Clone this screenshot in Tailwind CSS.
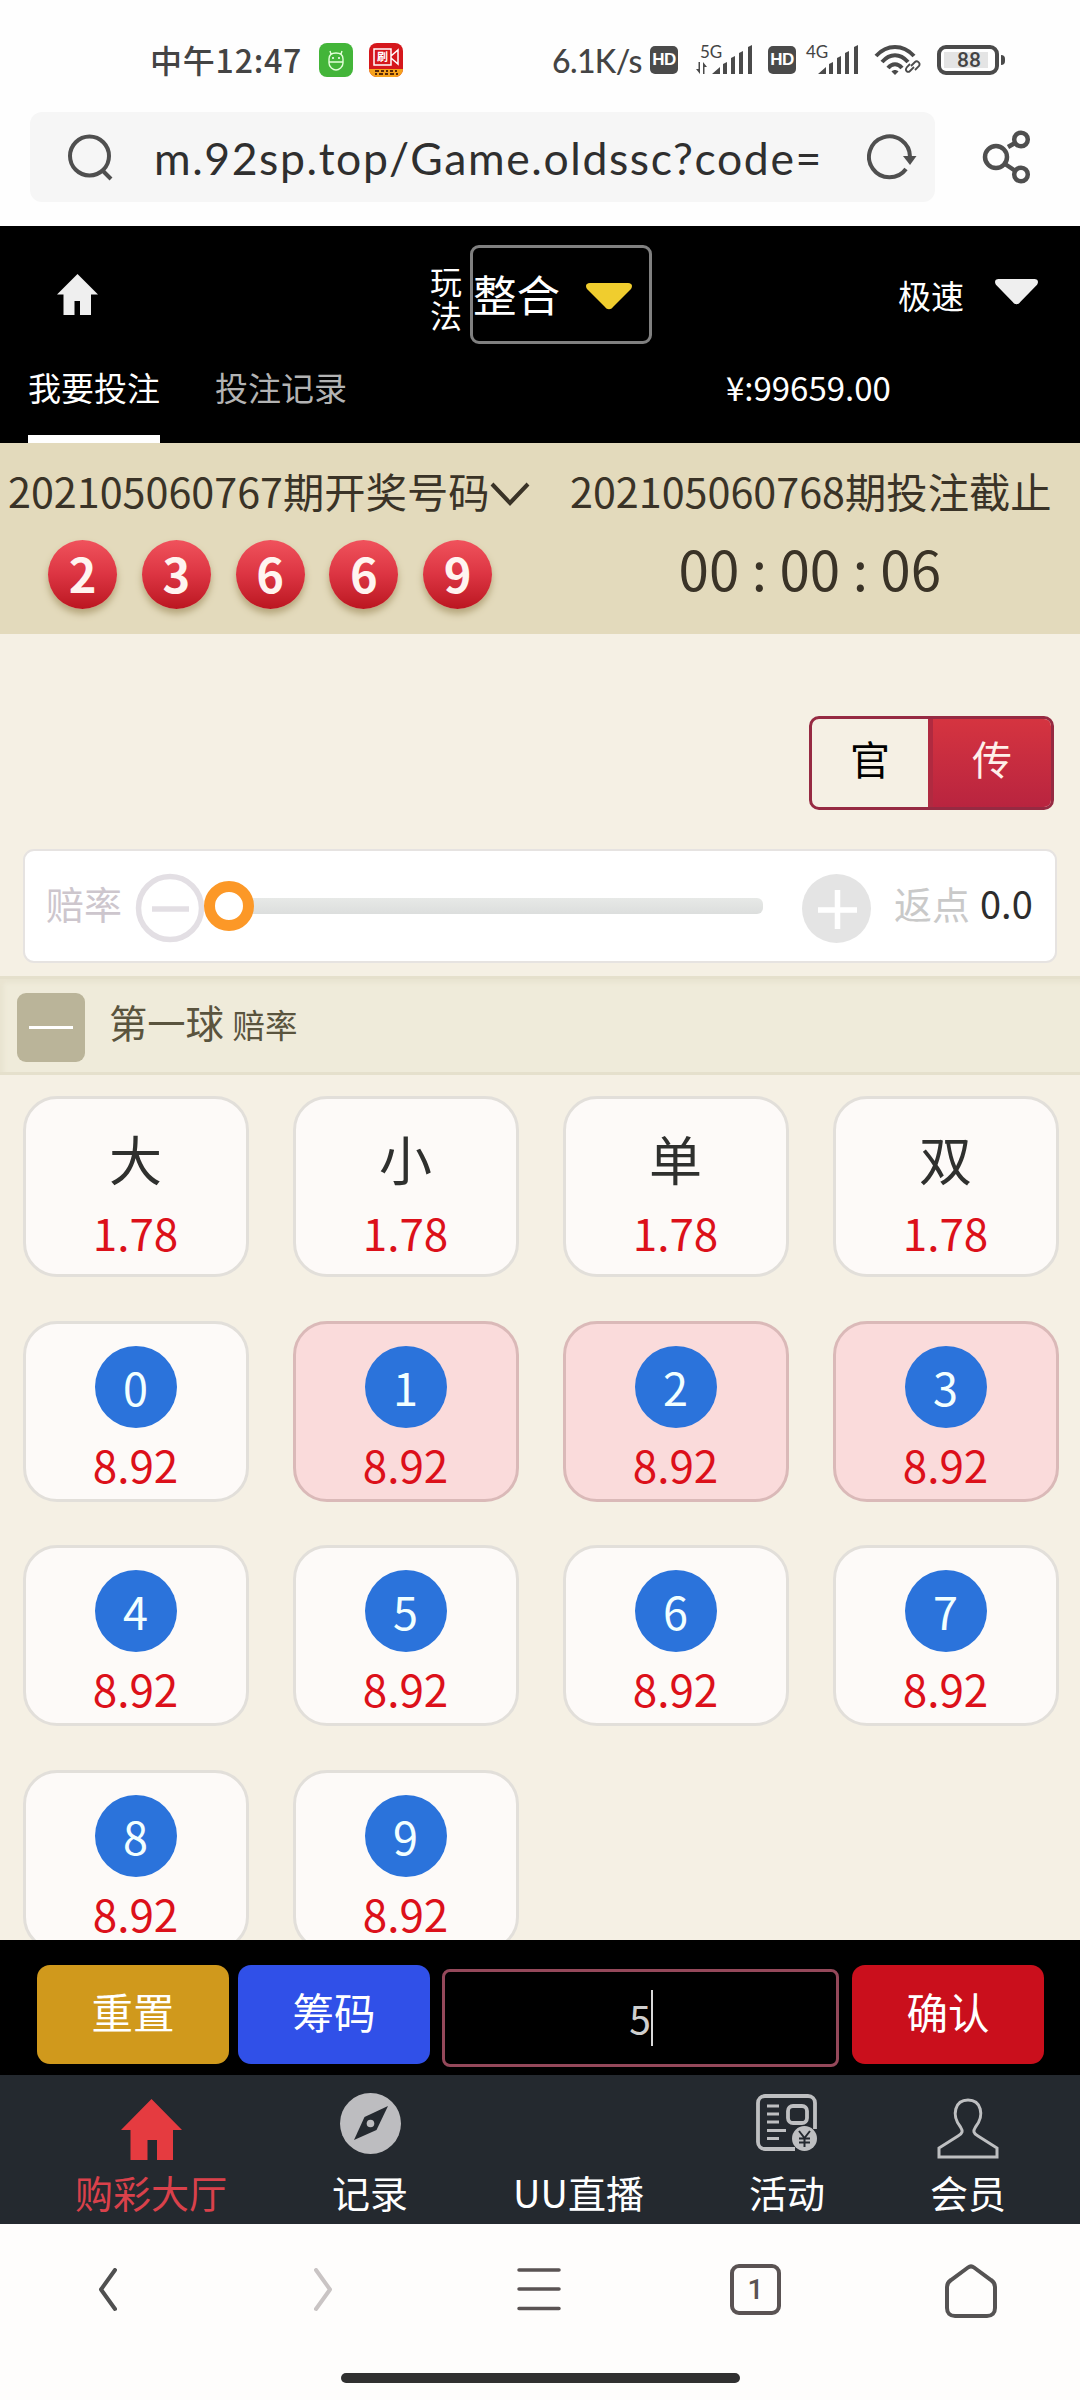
<!DOCTYPE html>
<html lang="zh-CN">
<head>
<meta charset="utf-8">
<title>投注</title>
<script src="https://cdn.jsdelivr.net/npm/@tailwindcss/browser@4"></script>
</head>
<body class="w-[1080px] h-[2400px] overflow-hidden bg-[#fefefe] font-['Noto_Sans_CJK_SC',sans-serif] leading-none whitespace-nowrap">

<!-- status bar -->
<div class="h-[112px] flex items-start text-[#444444]">
  <div class="ml-[150px] mt-[42px] w-[152px] h-[34px] text-[32px] leading-[34px] font-medium tracking-[0.8px]">中午12:47</div>
  <svg class="ml-[17px] mt-[43px]" width="34" height="34" viewBox="0 0 34 34" fill="none">
    <rect width="34" height="34" rx="8" fill="#43b539"/>
    <path d="M10 16c0-3 2-6 7-6s7 3 7 6v4c0 4-4 7-7 7s-7-3-7-7zM10 19h14M12 11l-1-3M22 11l1-3" stroke="#e3ffd9" stroke-width="1.4"/>
    <circle cx="14" cy="15" r="1" fill="#fff"/><circle cx="20" cy="15" r="1" fill="#fff"/>
  </svg>
  <div class="relative ml-4 mt-[43px] w-[34px] h-[34px] rounded-lg overflow-hidden bg-[#d5171c]">
    <svg class="absolute inset-0" width="34" height="34" viewBox="0 0 34 34" fill="none">
      <path d="M0 26h34v8H0z" fill="#f6a21c"/>
      <path d="M5 6h17v16H5zM22 13l7-6v14l-7-6" stroke="#fff" stroke-width="1.5"/>
      <path d="M6 28h4M12 28h3M17 28h2M21 28h3M26 28h2M6 31h2M10 31h4M16 31h3M21 31h4M27 31h2" stroke="#5a2a08" stroke-width="2"/>
    </svg>
    <span class="absolute left-[8px] top-[8px] text-[11px] leading-[11px] font-bold text-white">刷</span>
  </div>
  <div class="ml-[149px] mt-[44px] w-[92px] h-[34px] text-[32px] leading-[34px] font-[Lato] font-medium tracking-[-0.600px]">6.1K/s</div>
  <div class="ml-[6px] mt-[46px] w-7 h-7 rounded-[5px] bg-[#4a4a4a] text-white text-[17px] leading-7 text-center font-['Liberation_Sans'] font-bold tracking-[-0.5px]">HD</div>
  <div class="relative ml-[18px] mt-[43px] w-[56px] h-8">
    <span class="absolute left-[4px] top-0 text-[17px] font-[Lato]">5G</span>
    <svg class="absolute inset-0" width="56" height="32" viewBox="0 0 56 32" fill="#4a4a4a">
      <path d="M4 19v12l-4-5h2.500V19zM7 31V19l4 5H8.500V31zM16 31l8-7v7zM27 21l4-2v12h-4zM35 15l4-2v18h-4zM43 10l4-2v23h-4zM52 4l4-2v29h-4z"/>
    </svg>
  </div>
  <div class="ml-[16px] mt-[46px] w-7 h-7 rounded-[5px] bg-[#4a4a4a] text-white text-[17px] leading-7 text-center font-['Liberation_Sans'] font-bold tracking-[-0.5px]">HD</div>
  <div class="relative ml-[6px] mt-[43px] w-[56px] h-8">
    <span class="absolute left-[4px] top-0 text-[17px] font-[Lato]">4G</span>
    <svg class="absolute inset-0" width="56" height="32" viewBox="0 0 56 32" fill="#4a4a4a">
      <path d="M16 31l8-7v7zM27 21l4-2v12h-4zM35 15l4-2v18h-4zM43 10l4-2v23h-4zM52 4l4-2v29h-4z"/>
    </svg>
  </div>
  <svg class="ml-[16px] mt-[44px]" width="48" height="32" viewBox="0 0 48 32" fill="none" stroke="#4a4a4a" stroke-width="4">
    <path d="M2 12C13 0 29 0 40 12M8 18c8-9 18-9 26 0M14 24c4-5 10-5 14 0"/>
    <path d="M17.500 27.500l3.500 3.500 3.500-3.500c-2-2-5-2-7 0z" fill="#4a4a4a" stroke="none"/>
    <path d="M37 22l4-4c2-2 6 1 4 4l-4 4M40 23l-4 4c-2 2-6 0-3-4l3-3" stroke-width="1.800"/>
  </svg>
  <div class="ml-[15px] mt-[45px] w-[62px] h-[30px] rounded-[9px] border-4 border-[#4a4a4a] p-[3px]">
    <div class="w-[44px] h-4 bg-[#e4e4e4] text-[21px] leading-4 text-center pl-[6px] font-[Roboto] font-medium">88</div>
  </div>
  <div class="ml-[2px] mt-[55px] w-1 h-[10px] rounded-r bg-[#4a4a4a]"></div>
</div>

<!-- address bar -->
<div class="h-[114px] flex items-start">
  <div class="ml-[30px] w-[905px] h-[90px] rounded-xl bg-[#f6f6f6] flex items-center">
    <svg class="ml-[36px] shrink-0" width="48" height="48" viewBox="0 0 48 48" fill="none" stroke="#4f4f4f" stroke-width="4">
      <circle cx="23.500" cy="23" r="19.500"/><path d="M36 37l9 9"/>
    </svg>
    <div class="ml-[40px] mt-[3px] w-[680px] shrink-0 text-[44.500px] font-[Lato] tracking-[1.600px] text-[#2f2f2f]">m.92sp.top/Game.oldssc?code=</div>
    <svg class="ml-[33px] shrink-0" width="52" height="48" viewBox="0 0 52 48" fill="none" stroke="#4f4f4f" stroke-width="4">
      <path d="M43 24A20.500 20.500 0 1 0 39 36"/><path d="M36 23h13.500l-6.500 9z" fill="#4f4f4f" stroke="none"/>
    </svg>
  </div>
  <svg class="ml-[46px] mt-[18px]" width="52" height="56" viewBox="0 0 52 56" fill="none" stroke="#4f4f4f" stroke-width="4.500">
    <circle cx="15" cy="27" r="11"/><circle cx="40" cy="9.500" r="6.800"/><circle cx="40" cy="44.500" r="6.800"/><path d="M27 17l7-4M24 34l9 6"/>
  </svg>
</div>

<!-- game header -->
<div class="h-[217px] bg-black text-white flex flex-col">
  <div class="h-[130px] flex items-start">
    <svg class="ml-[57px] mt-[48px]" width="41" height="41" viewBox="0 0 41 41" fill="#efefef"><path d="M20.500 0L41 20.500h-7V41H23V27h-5.500v14H6.500V20.500H0z"/></svg>
    <div class="ml-[332px] mt-[37px] w-8 text-[32px] leading-[34px]">玩<br>法</div>
    <div class="ml-[8px] mt-[19px] w-[182px] h-[99px] rounded-[9px] border-3 border-[#808080] flex items-start">
      <div class="mt-[24px] w-[90px] text-[43.500px] leading-[43px]">整合</div>
      <svg class="ml-[23px] mt-[35px]" width="46" height="27" viewBox="0 0 46 27" fill="#f0cd2e"><path d="M4 0h38c4 0 5 3 3 6L27 24c-2 3-6 3-8 0L1 6C-1 3 0 0 4 0z"/></svg>
    </div>
    <div class="ml-[246px] mt-[53px] w-[66px] text-[33px] leading-[33px]">极速</div>
    <svg class="ml-[31px] mt-[53px]" width="43" height="26" viewBox="0 0 46 27" preserveAspectRatio="none" fill="#efefef"><path d="M4 0h38c4 0 5 3 3 6L27 24c-2 3-6 3-8 0L1 6C-1 3 0 0 4 0z"/></svg>
  </div>
  <div class="h-[87px] flex items-start text-[33px] leading-[33px]">
    <div class="ml-7 w-[132px] h-[87px] pt-[15px] border-b-8 border-white">我要投注</div>
    <div class="ml-[55px] mt-[15px] w-[134px] text-[#b3b3b3]">投注记录</div>
    <div class="ml-[377px] mt-[15px]">¥:99659.00</div>
  </div>
</div>

<!-- draw result and countdown -->
<div class="h-[191px] bg-[#e3dabc] flex text-[#3a3327]">
  <div class="w-[570px] flex flex-col">
    <div class="mt-[26px] ml-2 h-[44px] flex items-center text-[41.300px]">202105060767期开奖号码
      <svg class="mt-[6px]" width="40" height="26" viewBox="0 0 40 26" fill="none" stroke="#3a3327" stroke-width="4"><path d="M2 3l18 19L38 3"/></svg>
    </div>
    <div id="balls" class="mt-[27px] ml-[48px] flex gap-[24.800px]"></div>
  </div>
  <div class="w-[510px] flex flex-col">
    <div class="mt-[26px] h-[44px] flex items-center text-[41.300px]">202105060768期投注截止</div>
    <div class="mt-[27px] ml-[108.500px] text-[54.700px] leading-[56px] tracking-[0.100px]">00 : 00 : 06</div>
  </div>
</div>

<!-- mode switch -->
<div class="h-[215px] pt-[82px] pl-[809px] bg-[#f5f0e4]">
  <div class="w-[245px] h-[94px] rounded-[10px] border-3 border-[#962a42] overflow-hidden flex text-[40px] leading-[79px] text-center">
    <div class="w-[116px] text-black">官</div>
    <div class="grow bg-linear-to-b from-[#d53440] to-[#b9243f] border-l-5 border-[#b02a40] text-[#fff0ea]">传</div>
  </div>
</div>

<!-- odds slider -->
<div class="h-[127px] bg-[#f5f0e4] px-[23px]">
  <div class="w-[1034px] h-[114px] rounded-[11px] border-2 border-[#e6e3e1] bg-white flex items-center text-[38px]">
    <div class="ml-[21px] -mt-1.5 w-[78px] text-[#cdc6cd]">赔率</div>
    <svg class="ml-[10px] mt-1" width="72" height="72" viewBox="0 0 72 72" fill="none" stroke="#e3dfe4" stroke-width="5.500"><circle cx="36" cy="36" r="31.500"/><path d="M18 37h37"/></svg>
    <div class="relative ml-[17px] w-[540px] h-4 rounded-r-md bg-linear-to-b from-[#e7e9e7] to-[#dcdedd]">
      <div class="absolute -left-[19px] -top-[17px] w-[50px] h-[50px] rounded-full border-[11px] border-[#fc9827] bg-white"></div>
    </div>
    <svg class="ml-[39px] mt-1" width="69" height="69" viewBox="0 0 69 69"><circle cx="34.500" cy="34.500" r="34.500" fill="#e4e4e4"/><path d="M16 36h39M35.500 16v39" stroke="#fff" stroke-width="5.500"/></svg>
    <div class="ml-[23px] -mt-1.5 w-[76px] text-[#c9c9c9]">返点</div>
    <div class="ml-[10px] -mt-1.5 text-[#2d2d2d] text-[38px]">0.0</div>
  </div>
</div>

<!-- section title -->
<div class="h-[99px] bg-[#efebda] border-y-3 border-[#e5e0cc] shadow-[inset_4px_4px_4px_#e9e4d1] flex items-start text-[#5a543e]">
  <div class="ml-[17px] mt-[14px] w-[68px] h-[69px] rounded-[9px] bg-[#bab499] flex items-center justify-center"><div class="w-[44px] h-[3px] bg-white"></div></div>
  <div class="ml-[24px] mt-[23px] text-[38.300px] leading-10">第一球 <span class="text-[32.500px]">赔率</span></div>
</div>

<!-- bet options -->
<div class="h-[865px] pt-[21px] overflow-hidden bg-[#f5f0e4]">
  <div id="grid" class="ml-[22.500px] grid grid-cols-4 gap-x-[44px] gap-y-[43.500px] w-[1036px] text-center"></div>
</div>

<!-- stake bar -->
<div class="h-[135px] bg-black flex items-start text-[41.500px] text-white text-center leading-[92px]">
  <div class="ml-[37px] mt-[25px] w-[192px] h-[99px] rounded-[13px] bg-[#d0991c]">重置</div>
  <div class="ml-[9px] mt-[25px] w-[192px] h-[99px] rounded-[13px] bg-[#3050e8]">筹码</div>
  <div class="ml-[12px] mt-[29px] w-[397px] h-[98px] rounded-lg border-3 border-[#94485a] flex items-center justify-center text-[39px] text-[#cfcfcf]">
    <span class="ml-[1px]">5</span><div class="w-[2px] h-[56px] bg-[#d8d8d8]"></div>
  </div>
  <div class="ml-[13px] mt-[25px] w-[192px] h-[99px] rounded-[13px] bg-[#ca0f1c]">确认</div>
</div>

<!-- site navigation -->
<div class="h-[149px] bg-[#24292f] pl-[75px] pr-[74px] flex justify-between text-[38px] text-white">
  <div class="flex flex-col items-center text-[#d9414b]">
    <svg class="mt-6 mb-[13px]" width="61" height="61" viewBox="0 0 61 61" fill="#e53b40"><path d="M30.500 0L61 31h-9v30H36V41h-9.500v20H9.500V31H0z"/></svg>购彩大厅
  </div>
  <div class="flex flex-col items-center">
    <svg class="mt-[18px] mb-[19px]" width="61" height="61" viewBox="0 0 61 61"><circle cx="30.500" cy="30.500" r="30.500" fill="#bdbdc0"/><path d="M48 13L36.500 37 14 47 24.500 24z" fill="#24292f"/><circle cx="30.500" cy="30.500" r="3.800" fill="#bdbdc0"/></svg>记录
  </div>
  <div class="flex flex-col items-center pt-[98px]">UU直播</div>
  <div class="flex flex-col items-center">
    <svg class="mt-[19px] mb-[18px]" width="61" height="61" viewBox="0 0 61 61" fill="none" stroke="#bebfc1" stroke-width="3.800">
      <path d="M39 55H9c-4 0-7-3-7-7V9c0-4 3-7 7-7h43c4 0 7 3 7 7v26"/><rect x="32" y="12" width="19" height="17" rx="5"/>
      <path d="M11 12h12M11 20h12M11 28h12M11 36.500h19M11 44.500h12" stroke-width="3"/>
      <circle cx="48.500" cy="44.500" r="12.500" fill="#bebfc1" stroke="none"/><path d="M43 37l5.500 7 5.500-7M48.500 44v9M43 44.500h11M43 48.500h11" stroke="#24292f" stroke-width="2"/>
    </svg>活动
  </div>
  <div class="flex flex-col items-center">
    <svg class="mt-[23px] mb-[14px]" width="62" height="61" viewBox="0 0 62 61" fill="none" stroke="#bebfc1" stroke-width="3"><path d="M2 59V50l19-12c5-3 5-5 2.500-9C14 17 18 2 31 2s17 15 7.500 27C36 33 36 35 41 38l19 12v9z"/></svg>会员
  </div>
</div>

<!-- browser toolbar -->
<div class="h-[176px] bg-[#fefdfc] flex flex-col">
  <div class="h-[149px] pt-[40px] pl-[98px] flex items-start">
    <svg class="mt-1" width="19" height="44" viewBox="0 0 19 44" fill="none" stroke="#505050" stroke-width="4" stroke-linecap="round" stroke-linejoin="round"><path d="M17 2L3 21.500 17 41"/></svg>
    <svg class="ml-[197px] mt-1" width="19" height="44" viewBox="0 0 19 44" fill="none" stroke="#c9c4c4" stroke-width="4" stroke-linecap="round" stroke-linejoin="round"><path d="M2 2l14 19.500L2 41"/></svg>
    <svg class="ml-[184px] mt-[4px]" width="44" height="44" viewBox="0 0 44 44" stroke="#5a5353" stroke-width="3.500" stroke-linecap="round"><path d="M2 2h40M2 21h40M2 40.500h40"/></svg>
    <div class="ml-[169px] w-[51px] h-[51px] rounded-[9px] border-4 border-[#5a5353] text-[#5a5353] text-[28px] leading-[43px] text-center font-medium font-[Roboto]">1</div>
    <svg class="ml-[164px]" width="52" height="54" viewBox="0 0 52 54" fill="none" stroke="#555353" stroke-width="4"><path d="M2 23c0-3 1-5 4-7L23 3.500c2-1.500 4-1.500 6 0L46 16c3 2 4 4 4 7v21c0 5-3 8-8 8H10c-5 0-8-3-8-8z"/></svg>
  </div>
  <div class="mx-auto w-[399px] h-[10px] rounded-full bg-[#303030]"></div>
</div>

<script>
  // drawn balls
  document.getElementById('balls').innerHTML = [2, 3, 6, 6, 9].map(n =>
    `<div class="w-[69px] h-[69px] rounded-full bg-linear-to-b from-[#f0525c] via-[#dc3442] to-[#bb1520] shadow-[0_5px_7px_#b5a67c] text-[#fff4f0] text-[47px] leading-[66px] text-center font-bold">${n}</div>`).join('');
  // text tiles first, then numbered tiles; 1-3 are selected
  const card = 'w-[226px] h-[181px] rounded-[34px] border-3 border-[#e2dfda] bg-[#fdfaf8] flex flex-col items-center text-[44px] text-[#dc101a]';
  const picked = 'w-[226px] h-[181px] rounded-[34px] border-3 border-[#dab9b8] bg-[#fadbdb] flex flex-col items-center text-[44px] text-[#dc101a]';
  document.getElementById('grid').innerHTML =
    ['大', '小', '单', '双'].map(t =>
      `<div class="${card}"><div class="mt-[32px] h-[54px] text-[53px] leading-[54px] text-[#2f302e]">${t}</div><div class="mt-[25px] leading-[44px]">1.78</div></div>`).join('') +
    [0, 1, 2, 3, 4, 5, 6, 7, 8, 9].map(n =>
      `<div class="${n > 0 && n < 4 ? picked : card}"><div class="mt-[22px] w-[82px] h-[82px] rounded-full bg-[#2b73db] text-[45px] leading-[82px] text-[#f2ffff]">${n}</div><div class="mt-[14px] leading-[44px]">8.92</div></div>`).join('');
</script>
</body>
</html>
